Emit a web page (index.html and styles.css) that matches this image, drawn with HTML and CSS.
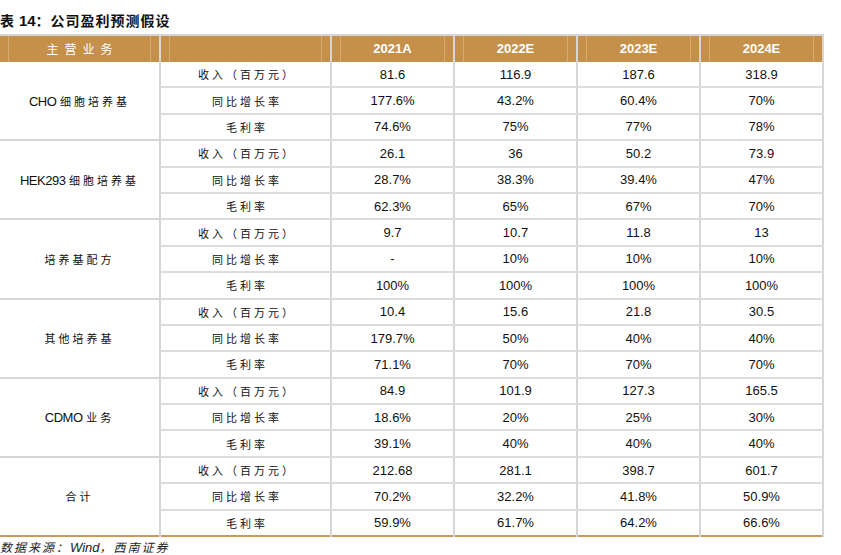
FILE: index.html
```html
<!DOCTYPE html>
<html lang="zh">
<head>
<meta charset="utf-8">
<title>公司盈利预测假设</title>
<link rel="stylesheet" href="styles.css">
</head>
<body>
<div class="title"><span class="cn">表</span> <span class="num">14</span><span class="cn">：公司盈利预测假设</span></div>
<table class="tbl">
  <colgroup>
    <col class="c1"><col class="c2"><col class="c3"><col class="c3"><col class="c3"><col class="c3">
  </colgroup>
  <thead>
    <tr>
      <th><span class="hin cn">主营业务</span></th>
      <th><span class="hin"></span></th>
      <th><span class="hin">2021A</span></th>
      <th><span class="hin">2022E</span></th>
      <th><span class="hin">2023E</span></th>
      <th><span class="hin">2024E</span></th>
    </tr>
  </thead>
  <tbody>
    <tr class="gs"><td rowspan="3" class="grp"><span class="lat">CHO</span> <span class="cn">细胞培养基</span></td><td class="lab cn">收入（百万元）</td><td>81.6</td><td>116.9</td><td>187.6</td><td>318.9</td></tr>
    <tr><td class="lab cn">同比增长率</td><td>177.6%</td><td>43.2%</td><td>60.4%</td><td>70%</td></tr>
    <tr><td class="lab cn">毛利率</td><td>74.6%</td><td>75%</td><td>77%</td><td>78%</td></tr>

    <tr class="gs"><td rowspan="3" class="grp"><span class="lat">HEK293</span> <span class="cn">细胞培养基</span></td><td class="lab cn">收入（百万元）</td><td>26.1</td><td>36</td><td>50.2</td><td>73.9</td></tr>
    <tr><td class="lab cn">同比增长率</td><td>28.7%</td><td>38.3%</td><td>39.4%</td><td>47%</td></tr>
    <tr><td class="lab cn">毛利率</td><td>62.3%</td><td>65%</td><td>67%</td><td>70%</td></tr>

    <tr class="gs"><td rowspan="3" class="grp cn">培养基配方</td><td class="lab cn">收入（百万元）</td><td>9.7</td><td>10.7</td><td>11.8</td><td>13</td></tr>
    <tr><td class="lab cn">同比增长率</td><td>-</td><td>10%</td><td>10%</td><td>10%</td></tr>
    <tr><td class="lab cn">毛利率</td><td>100%</td><td>100%</td><td>100%</td><td>100%</td></tr>

    <tr class="gs"><td rowspan="3" class="grp cn">其他培养基</td><td class="lab cn">收入（百万元）</td><td>10.4</td><td>15.6</td><td>21.8</td><td>30.5</td></tr>
    <tr><td class="lab cn">同比增长率</td><td>179.7%</td><td>50%</td><td>40%</td><td>40%</td></tr>
    <tr><td class="lab cn">毛利率</td><td>71.1%</td><td>70%</td><td>70%</td><td>70%</td></tr>

    <tr class="gs"><td rowspan="3" class="grp"><span class="lat">CDMO</span> <span class="cn">业务</span></td><td class="lab cn">收入（百万元）</td><td>84.9</td><td>101.9</td><td>127.3</td><td>165.5</td></tr>
    <tr><td class="lab cn">同比增长率</td><td>18.6%</td><td>20%</td><td>25%</td><td>30%</td></tr>
    <tr><td class="lab cn">毛利率</td><td>39.1%</td><td>40%</td><td>40%</td><td>40%</td></tr>

    <tr class="gs"><td rowspan="3" class="grp cn">合计</td><td class="lab cn">收入（百万元）</td><td>212.68</td><td>281.1</td><td>398.7</td><td>601.7</td></tr>
    <tr><td class="lab cn">同比增长率</td><td>70.2%</td><td>32.2%</td><td>41.8%</td><td>50.9%</td></tr>
    <tr class="last"><td class="lab cn">毛利率</td><td>59.9%</td><td>61.7%</td><td>64.2%</td><td>66.6%</td></tr>
  </tbody>
</table>
<div class="source"><span class="cn">数据来源：</span>Wind<span class="cn">，西南证券</span></div>
</body>
</html>
```

FILE: styles.css
```css
html, body {
  margin: 0;
  padding: 0;
  background: #ffffff;
}
body {
  font-family: "Liberation Sans", Arial, "Noto Sans CJK SC", sans-serif;
  color: #111111;
  width: 841px;
  height: 555px;
  overflow: hidden;
}
.cn {
  font-family: "Noto Sans CJK SC", sans-serif;
}
.title {
  height: 34px;
  box-sizing: border-box;
  padding-top: 10px;
  font-size: 14px;
  line-height: 20px;
  font-weight: bold;
  white-space: nowrap;
}
.title .cn {
  letter-spacing: 1px;
}
.title .num {
  font-size: 15px;
}
.tbl {
  width: 823px;
  table-layout: fixed;
  border-collapse: collapse;
  border-top: 2px solid #d4d4d4;
  border-bottom: 2px solid #c9995a;
}
.c1 { width: 160px; }
.c2 { width: 171px; }
.c3 { width: 123px; }
.tbl th {
  height: 26px;
  padding: 0 8px;
  background: #c5904a;
  color: #ffffff;
  font-size: 13px;
  font-weight: bold;
  border-left: 2px solid #d6d6d6;
  border-right: 2px solid #d6d6d6;
}
.tbl th:first-child {
  border-left: none;
}
.hin {
  display: block;
  height: 26px;
  line-height: 26px;
  border-left: 1px solid #d7ac72;
  border-right: 1px solid #d7ac72;
  text-align: center;
}
.hin.cn {
  font-weight: normal;
  font-size: 12px;
  letter-spacing: 6px;
  text-indent: 6px;
}
.tbl td {
  height: 24.4px;
  padding: 0;
  text-align: center;
  font-size: 13px;
  border-left: 2px solid #d6d6d6;
  border-right: 2px solid #d6d6d6;
  border-bottom: 2px solid #dcdcdc;
}
.tbl td.grp {
  border-left: none;
}
.tbl td.lab {
  font-size: 11px;
  letter-spacing: 3px;
  text-indent: 3px;
}
.grp .cn,
td.grp.cn {
  font-size: 11px;
  letter-spacing: 3px;
}
.lat {
  font-size: 13px;
  letter-spacing: -0.5px;
}
.tbl tr.last td {
  border-bottom: none;
}
.tbl td.grp {
  border-bottom: 2px solid #d6d6d6;
}
.tbl tr:last-child td.grp,
.tbl tr.gs:nth-last-child(3) td.grp {
  border-bottom: none;
}
.source {
  margin-top: 2px;
  font-size: 13px;
  line-height: 16px;
  font-style: italic;
  color: #222222;
  white-space: nowrap;
}
.source .cn {
  font-size: 12px;
  letter-spacing: 2px;
}
```
